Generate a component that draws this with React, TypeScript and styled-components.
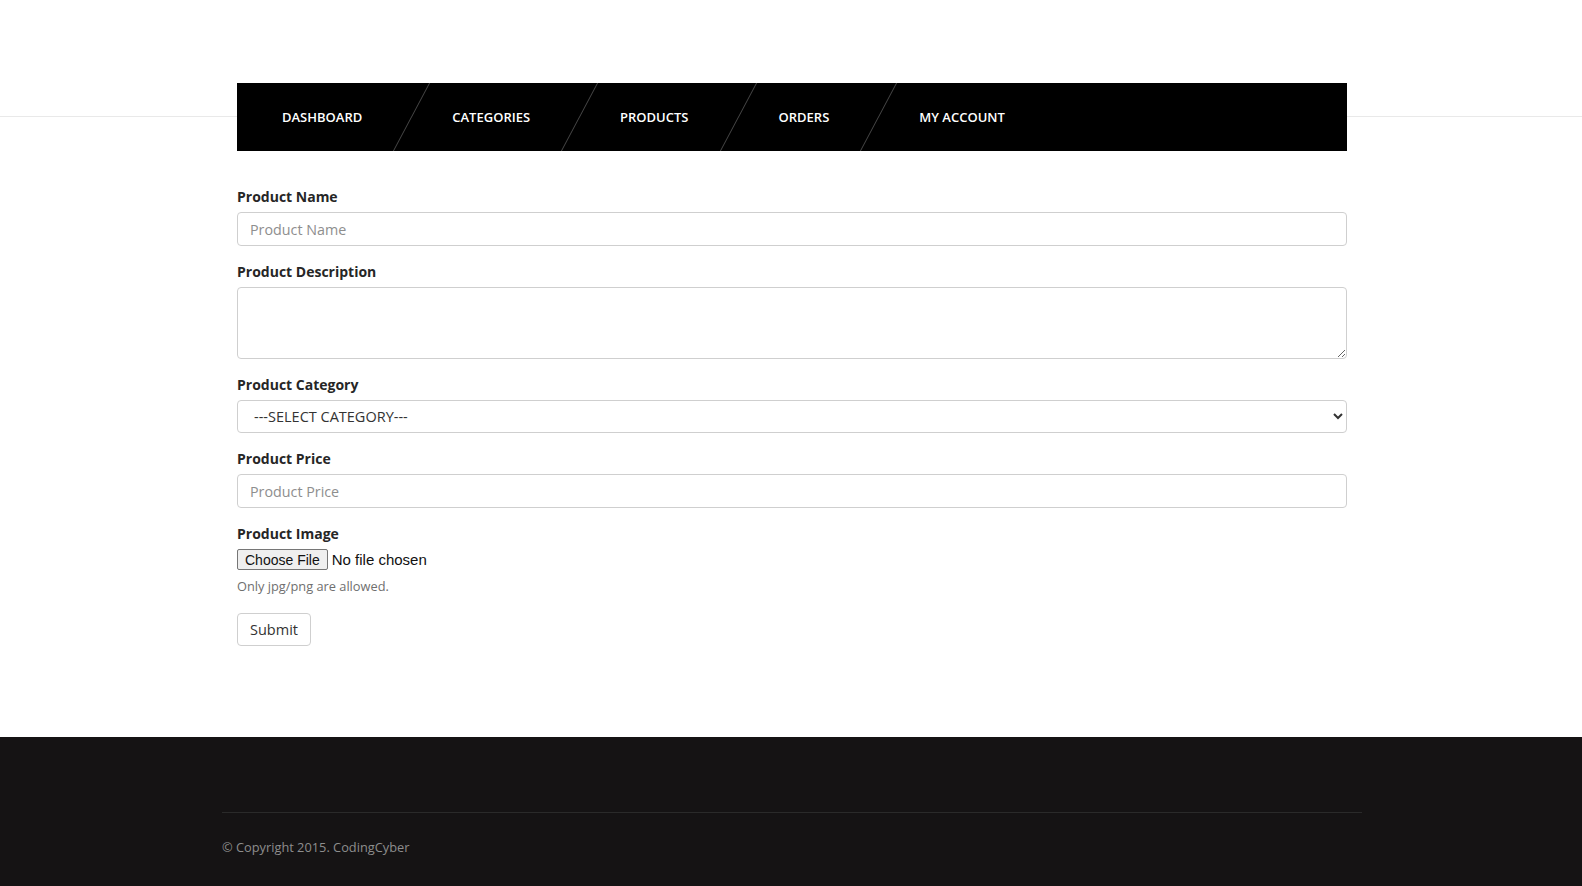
import React from "react";
import styled, { createGlobalStyle } from "styled-components";

const GlobalStyle = createGlobalStyle`
  html, body { margin: 0; padding: 0; }
  body {
    font-family: "Open Sans", "Noto Sans", sans-serif;
    font-size: 14px;
    color: #333;
    background: #fff;
  }
  *, *::before, *::after { box-sizing: border-box; }
`;

const Page = styled.div`
  min-height: 100vh;
  display: flex;
  flex-direction: column;
`;

const Header = styled.header`
  position: relative;
  padding-top: 83px;
  &::before {
    content: "";
    position: absolute;
    left: 0;
    right: 0;
    top: 116px;
    height: 1px;
    background: #e9e9e9;
  }
`;

const Container = styled.div`
  width: 1112px;
  padding-left: 2px;
  margin: 0 auto;
`;

const NavBar = styled.ul`
  position: relative;
  z-index: 1;
  display: flex;
  margin: 0;
  padding: 0;
  list-style: none;
  height: 68px;
  background: #000;
  overflow: hidden;
`;

const NavItem = styled.li<{ $sep?: boolean }>`
  position: relative;
  padding: 0 45px;
  line-height: 68px;
  font-size: 13px;
  font-weight: 600;
  color: #fff;
  text-transform: uppercase;
  white-space: nowrap;
  cursor: pointer;
  &::after {
    content: "";
    display: ${(p) => (p.$sep ? "block" : "none")};
    position: absolute;
    top: 0;
    bottom: 0;
    right: -5px;
    width: 1px;
    background: #474747;
    transform: skewX(-28deg);
  }
`;

const Main = styled.main`
  flex: 1;
  padding-top: 35px;
  padding-bottom: 60px;
`;

const FormGroup = styled.div`
  margin-bottom: 15px;
`;

const Label = styled.label`
  display: block;
  font-size: 14px;
  font-weight: 700;
  line-height: 22px;
  color: #262626;
  margin-bottom: 4px;
`;

const TextInput = styled.input`
  display: block;
  width: 100%;
  height: 34px;
  padding: 6px 12px;
  font-family: "Open Sans", sans-serif;
  font-size: 14.3px;
  color: #333;
  background: #fff;
  border: 1px solid #cfcfcf;
  border-radius: 4px;
  outline: none;
  &::placeholder { color: #8e8e8e; }
`;

const TextArea = styled.textarea`
  display: block;
  width: 100%;
  height: 72px;
  padding: 6px 12px;
  font-family: "Open Sans", sans-serif;
  font-size: 14px;
  color: #333;
  border: 1px solid #cfcfcf;
  border-radius: 4px;
  outline: none;
`;

const Select = styled.select`
  display: block;
  width: 100%;
  height: 33px;
  padding: 4px 12px;
  font-family: "Open Sans", sans-serif;
  font-size: 14.5px;
  color: #333;
  background: #fff;
  border: 1px solid #cfcfcf;
  border-radius: 4px;
  outline: none;
`;

const FileInput = styled.input`
  display: block;
  font-family: "Liberation Sans", Arial, sans-serif;
  font-size: 15px;
  color: #111;
  &::file-selector-button {
    height: 21px;
    margin-right: 4px;
    padding: 0 7px;
    font-family: "Liberation Sans", Arial, sans-serif;
    font-size: 14px;
    color: #111;
    background: #efefef;
    border: 1px solid #767676;
    border-radius: 2px;
  }
`;

const Help = styled.small`
  display: block;
  margin-top: 7px;
  font-size: 12.8px;
  line-height: 18px;
  color: #6f6f6f;
`;

const SubmitButton = styled.button`
  margin-top: 3px;
  height: 33px;
  padding: 0 12px;
  font-family: "Open Sans", sans-serif;
  font-size: 14.5px;
  color: #333;
  background: #fff;
  border: 1px solid #cfcfcf;
  border-radius: 4px;
  cursor: pointer;
`;

const Footer = styled.footer`
  height: 149px;
  background: #151314;
`;

const FooterInner = styled.div`
  width: 1142px;
  padding-left: 2px;
  margin: 0 auto;
  padding-top: 75px;
`;

const FooterBottom = styled.div`
  border-top: 1px solid #2a2a2a;
  padding-top: 24px;
  font-size: 12.8px;
  line-height: 20px;
  color: #8d8d8d;
`;

const navItems = ["Dashboard", "Categories", "Products", "Orders", "My Account"];

export default function App() {
  return (
    <Page>
      <GlobalStyle />
      <Header>
        <Container>
          <NavBar>
            {navItems.map((item, i) => (
              <NavItem key={item} $sep={i < navItems.length - 1}>
                {item}
              </NavItem>
            ))}
          </NavBar>
        </Container>
      </Header>
      <Main>
        <Container>
          <form onSubmit={(e) => e.preventDefault()}>
            <FormGroup>
              <Label htmlFor="pname">Product Name</Label>
              <TextInput id="pname" type="text" placeholder="Product Name" />
            </FormGroup>
            <FormGroup>
              <Label htmlFor="pdesc">Product Description</Label>
              <TextArea id="pdesc" />
            </FormGroup>
            <FormGroup>
              <Label htmlFor="pcat">Product Category</Label>
              <Select id="pcat" defaultValue="">
                <option value="">---SELECT CATEGORY---</option>
              </Select>
            </FormGroup>
            <FormGroup>
              <Label htmlFor="pprice">Product Price</Label>
              <TextInput id="pprice" type="text" placeholder="Product Price" />
            </FormGroup>
            <FormGroup>
              <Label htmlFor="pimg">Product Image</Label>
              <FileInput id="pimg" type="file" />
              <Help>Only jpg/png are allowed.</Help>
            </FormGroup>
            <SubmitButton type="submit">Submit</SubmitButton>
          </form>
        </Container>
      </Main>
      <Footer>
        <FooterInner>
          <FooterBottom>© Copyright 2015. CodingCyber</FooterBottom>
        </FooterInner>
      </Footer>
    </Page>
  );
}
